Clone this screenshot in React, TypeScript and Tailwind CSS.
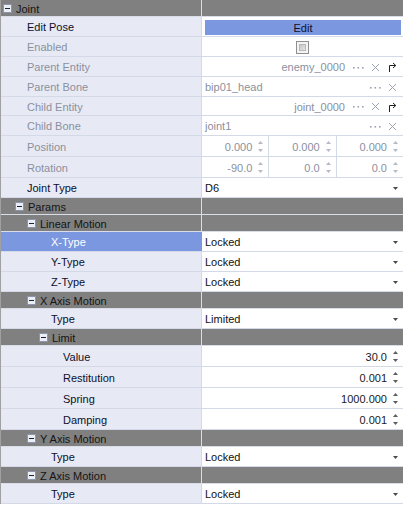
import React from "react";

const HPAD = ["pl-[2px]", "pl-[14px]", "pl-[26px]", "pl-[38px]"];
const PPAD = ["pl-[14px]", "pl-[26px]", "pl-[38px]", "pl-[50px]", "pl-[62px]"];

function Minus() {
  return (
    <svg width="9" height="9" viewBox="0 0 9 9" className="shrink-0">
      <rect x="0.5" y="0.5" width="8" height="8" fill="#eceef6" stroke="#8c95b0" />
      <path d="M2 4.5H7" stroke="#1c1f3a" strokeWidth="1" />
    </svg>
  );
}

function T({ className = "", children }: { className?: string; children: React.ReactNode }) {
  return <span className={`pt-[2px] ${className}`}>{children}</span>;
}

function Header({ depth, label }: { depth: number; label: string }) {
  return (
    <div className="flex h-[17px] border-b border-[#d9dde8] bg-[#808080] text-[#141414]">
      <div className={`flex w-[201px] shrink-0 items-center gap-[4px] border-r border-[#d9dde8] ${HPAD[depth]}`}>
        <Minus />
        <T>{label}</T>
      </div>
      <div className="flex-1" />
    </div>
  );
}

function Row({
  depth,
  label,
  disabled,
  selected,
  h = 20,
  children,
}: {
  depth: number;
  label: string;
  disabled?: boolean;
  selected?: boolean;
  h?: number;
  children?: React.ReactNode;
}) {
  const hc = h === 21 ? "h-[21px]" : h === 19 ? "h-[19px]" : "h-[20px]";
  const leftColor = selected
    ? "bg-[#7b97e0] text-white border-[#7b97e0]"
    : disabled
    ? "bg-[#e7eaf4] text-[#8b90a0] border-[#d3d9e6]"
    : "bg-[#e7eaf4] text-[#0e0f2a] border-[#d3d9e6]";
  return (
    <div className={`flex ${hc} border-b border-[#d3d9e6]`}>
      <div className={`flex w-[201px] shrink-0 items-center border-r ${leftColor} ${PPAD[depth]}`}>
        <T>{label}</T>
      </div>
      <div className="flex min-w-0 flex-1 items-center bg-white">{children}</div>
    </div>
  );
}

function Slot({ children }: { children: React.ReactNode }) {
  return <div className="flex w-[17px] shrink-0 items-center justify-center pt-[1px]">{children}</div>;
}

function Dots() {
  return (
    <svg width="11" height="3" viewBox="0 0 11 3">
      <rect x="0" y="1" width="1.6" height="1.6" fill="#9da2b1" />
      <rect x="4.5" y="1" width="1.6" height="1.6" fill="#9da2b1" />
      <rect x="9" y="1" width="1.6" height="1.6" fill="#9da2b1" />
    </svg>
  );
}

function XIcon() {
  return (
    <svg width="9" height="9" viewBox="0 0 9 9">
      <path d="M1 1L8 8M8 1L1 8" stroke="#9da2b1" strokeWidth="1" />
    </svg>
  );
}

function Redirect() {
  return (
    <svg width="9" height="10" viewBox="0 0 9 10">
      <path d="M1.5 10V3.5H7.5" stroke="#222" strokeWidth="1" fill="none" />
      <path d="M5 1L7.8 3.5L5 6" stroke="#222" strokeWidth="1" fill="none" />
    </svg>
  );
}

function Arrows({ dim }: { dim?: boolean }) {
  const c = dim ? "#b5bac7" : "#5c5c5c";
  return (
    <svg width="5" height="13" viewBox="0 0 5 13" className="mt-[1px] shrink-0">
      <path d="M0 4L2.5 1L5 4Z" fill={c} />
      <path d="M0 9L5 9L2.5 12Z" fill={c} />
    </svg>
  );
}

function Caret() {
  return (
    <svg width="5" height="3" viewBox="0 0 5 3" className="mr-[5px] mt-[2px] shrink-0">
      <path d="M0 0H5L2.5 3Z" fill="#4a4a4a" />
    </svg>
  );
}

function Dropdown({ value }: { value: string }) {
  return (
    <>
      <T className="ml-[3px] flex-1 text-[#111]">{value}</T>
      <Caret />
    </>
  );
}

function SpinCell({ value, last }: { value: string; last?: boolean }) {
  return (
    <div
      className={`flex h-full flex-1 items-center justify-end pr-[5px] text-[#8b90a0] ${
        last ? "" : "border-r border-[#d3d9e6]"
      }`}
    >
      <T className="mr-[6px]">{value}</T>
      <Arrows dim />
    </div>
  );
}

function Spin({ value }: { value: string }) {
  return (
    <>
      <T className="mr-[6px] flex-1 text-right text-[#1a1a1a]">{value}</T>
      <Arrows />
      <div className="w-[5px] shrink-0" />
    </>
  );
}

export default function App() {
  return (
    <div className="h-[505px] w-[403px] overflow-hidden bg-white font-['Liberation_Sans',Arial,sans-serif] text-[11px] leading-none">
      <div className="border-l border-[#a0a0a0]">
        <Header depth={0} label="Joint" />
        <Row depth={1} label="Edit Pose">
          <div className="mb-[1px] ml-[3px] mr-[2px] mt-[3px] flex flex-1 items-center justify-center self-stretch bg-[#7b97e0] text-[#0e0f2a]">
            <T>Edit</T>
          </div>
        </Row>
        <Row depth={1} label="Enabled" disabled>
          <div className="flex flex-1 justify-center pt-[1px]">
            <div className="h-[13px] w-[13px] border border-[#8f8f8f] bg-[#f4f4f4] p-[2px]">
              <div className="h-full w-full border border-[#b8b8b8] bg-gradient-to-br from-[#c8c8c8] to-[#e4e4e4]" />
            </div>
          </div>
        </Row>
        <Row depth={1} label="Parent Entity" disabled>
          <div className="flex flex-1 items-center justify-end text-[#8b90a0]">
            <T className="mr-[5px]">enemy_0000</T>
            <Slot>
              <Dots />
            </Slot>
            <Slot>
              <XIcon />
            </Slot>
            <Slot>
              <Redirect />
            </Slot>
            <div className="w-[2px] shrink-0" />
          </div>
        </Row>
        <Row depth={1} label="Parent Bone" disabled>
          <T className="ml-[3px] flex-1 text-[#8b90a0]">bip01_head</T>
          <Slot>
            <Dots />
          </Slot>
          <Slot>
            <XIcon />
          </Slot>
          <div className="w-[2px] shrink-0" />
        </Row>
        <Row depth={1} label="Child Entity" disabled h={19}>
          <div className="flex flex-1 items-center justify-end text-[#8b90a0]">
            <T className="mr-[5px]">joint_0000</T>
            <Slot>
              <Dots />
            </Slot>
            <Slot>
              <XIcon />
            </Slot>
            <Slot>
              <Redirect />
            </Slot>
            <div className="w-[2px] shrink-0" />
          </div>
        </Row>
        <Row depth={1} label="Child Bone" disabled>
          <T className="ml-[3px] flex-1 text-[#8b90a0]">joint1</T>
          <Slot>
            <Dots />
          </Slot>
          <Slot>
            <XIcon />
          </Slot>
          <div className="w-[2px] shrink-0" />
        </Row>
        <Row depth={1} label="Position" disabled h={21}>
          <SpinCell value="0.000" />
          <SpinCell value="0.000" />
          <SpinCell value="0.000" last />
        </Row>
        <Row depth={1} label="Rotation" disabled h={21}>
          <SpinCell value="-90.0" />
          <SpinCell value="0.0" />
          <SpinCell value="0.0" last />
        </Row>
        <Row depth={1} label="Joint Type">
          <Dropdown value="D6" />
        </Row>

        <Header depth={1} label="Params" />
        <Header depth={2} label="Linear Motion" />
        <Row depth={3} label="X-Type" selected>
          <Dropdown value="Locked" />
        </Row>
        <Row depth={3} label="Y-Type">
          <Dropdown value="Locked" />
        </Row>
        <Row depth={3} label="Z-Type">
          <Dropdown value="Locked" />
        </Row>

        <Header depth={2} label="X Axis Motion" />
        <Row depth={3} label="Type">
          <Dropdown value="Limited" />
        </Row>
        <Header depth={3} label="Limit" />
        <Row depth={4} label="Value" h={21}>
          <Spin value="30.0" />
        </Row>
        <Row depth={4} label="Restitution" h={21}>
          <Spin value="0.001" />
        </Row>
        <Row depth={4} label="Spring" h={21}>
          <Spin value="1000.000" />
        </Row>
        <Row depth={4} label="Damping" h={21}>
          <Spin value="0.001" />
        </Row>

        <Header depth={2} label="Y Axis Motion" />
        <Row depth={3} label="Type">
          <Dropdown value="Locked" />
        </Row>
        <Header depth={2} label="Z Axis Motion" />
        <Row depth={3} label="Type">
          <Dropdown value="Locked" />
        </Row>
      </div>
    </div>
  );
}
